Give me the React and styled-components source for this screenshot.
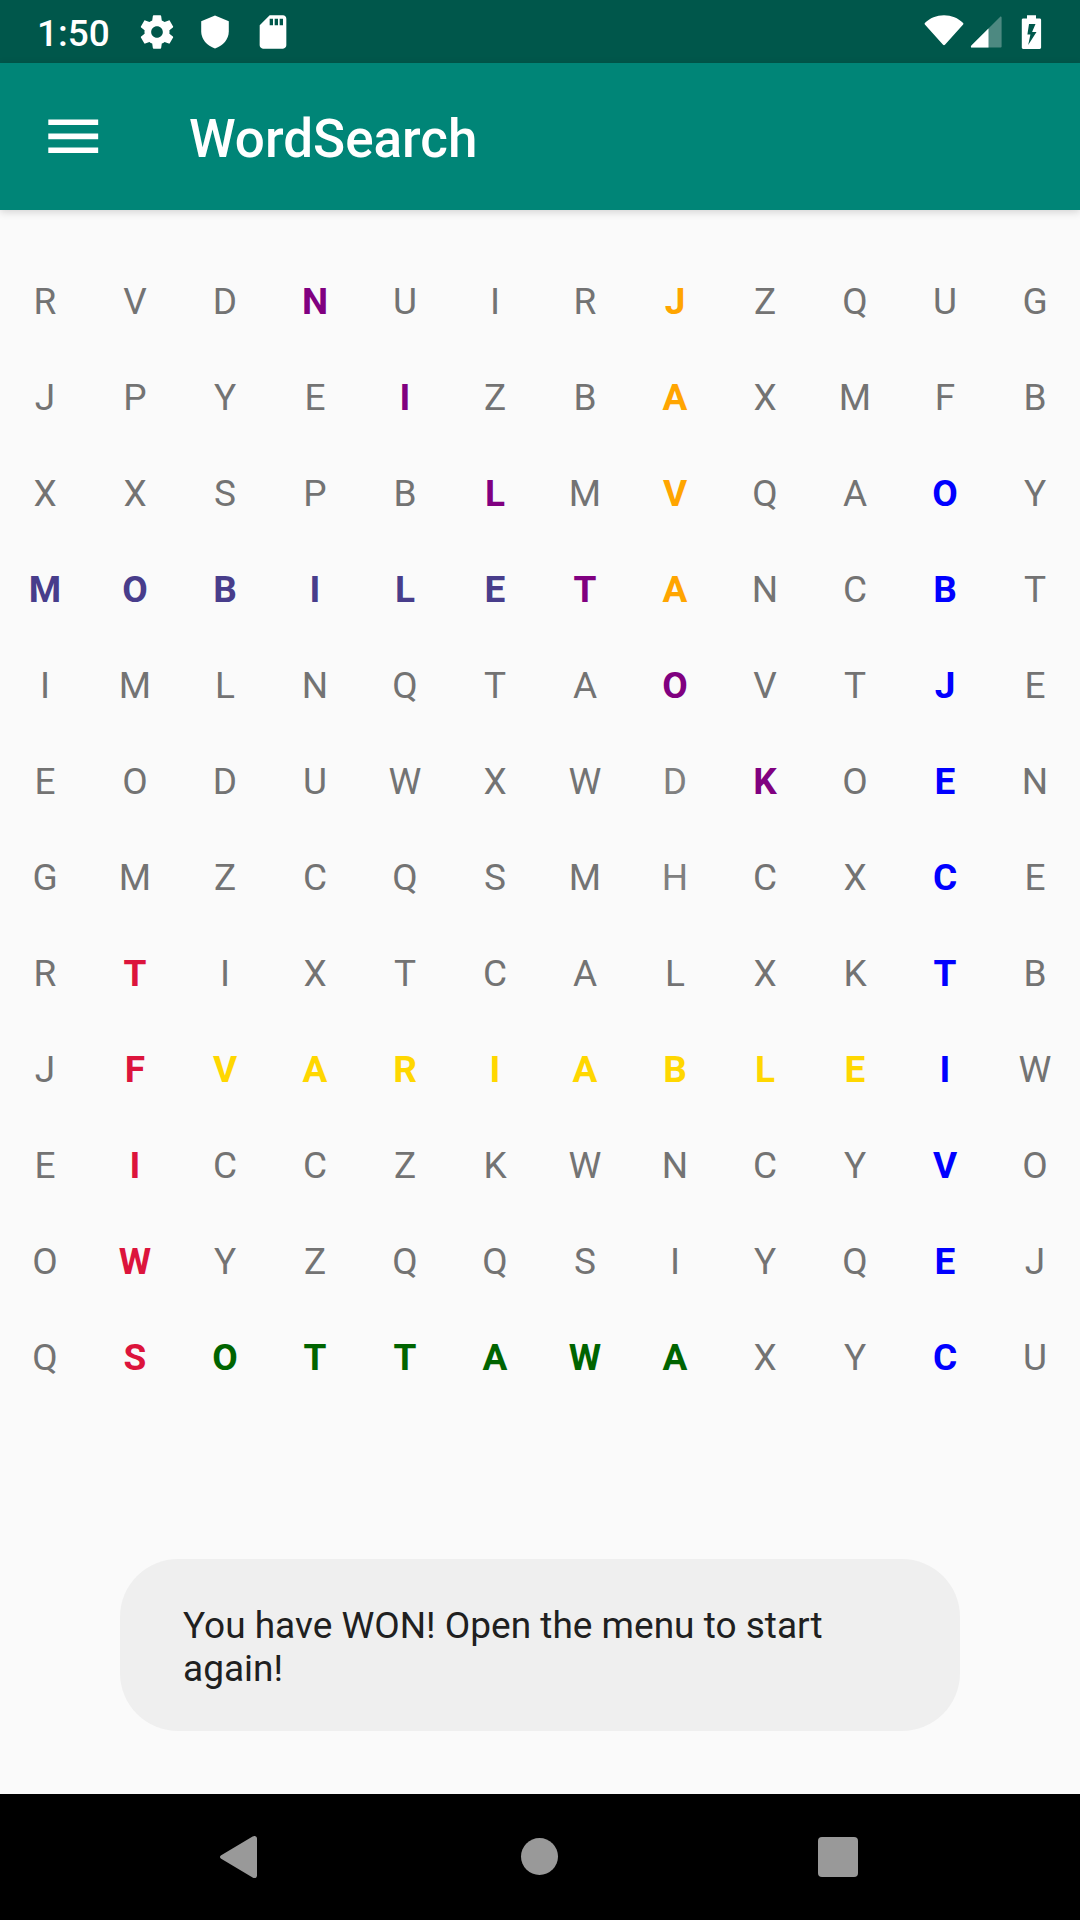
import React from "react";
import styled, { createGlobalStyle } from "styled-components";

const GlobalStyle = createGlobalStyle`
  *, *::before, *::after { box-sizing: border-box; }
  html, body, #root { height: 100%; }
  body {
    margin: 0;
    background: #fafafa;
    font-family: Roboto, "Liberation Sans", sans-serif;
  }
`;

const Screen = styled.div`
  display: flex;
  flex-direction: column;
  min-height: 100%;
`;

const StatusBar = styled.div`
  display: flex;
  align-items: center;
  justify-content: space-between;
  height: 63px;
  padding: 0 36px 0 37px;
  background: #00574b;
  color: #ffffff;
`;

const StatusGroup = styled.div`
  display: flex;
  align-items: center;
  gap: ${(p) => p.$gap}px;
`;

const Clock = styled.time`
  margin-right: 9px;
  padding-top: 3px;
  font-size: 37px;
  font-weight: 500;
  line-height: 43px;
`;

const Icon = styled.svg`
  display: block;
  flex: none;
  fill: currentColor;
`;

const AppBar = styled.header`
  display: flex;
  align-items: center;
  height: 147px;
  padding: 0 42px;
  gap: 84px;
  background: #008577;
  color: #ffffff;
  box-shadow: 0 2px 8px rgba(0, 0, 0, 0.16);
`;

const IconButton = styled.button`
  display: flex;
  padding: 0;
  border: 0;
  background: none;
  color: inherit;
  cursor: pointer;
`;

const Title = styled.h1`
  margin: 0;
  padding-top: 4px;
  font-size: 53px;
  font-weight: 500;
  line-height: 62px;
`;

const Main = styled.main`
  display: flex;
  flex: 1;
  flex-direction: column;
  justify-content: space-between;
`;

const Board = styled.div`
  display: grid;
  grid-template-columns: repeat(12, 1fr);
  grid-auto-rows: 96px;
  padding-top: 43px;
`;

const Letter = styled.span`
  display: flex;
  align-items: center;
  justify-content: center;
  color: ${(p) => p.$color};
  font-size: 37px;
  font-weight: ${(p) => (p.$found ? 700 : 400)};
  line-height: 43px;
`;

const Toast = styled.p`
  margin: 48px 120px 63px;
  padding: 45px 63px 41px;
  border-radius: 58px;
  background: #efefef;
  color: #202020;
  font-size: 37px;
  line-height: 43px;
`;

const NavBar = styled.nav`
  display: grid;
  grid-template-columns: repeat(3, 1fr);
  align-items: center;
  justify-items: center;
  height: 126px;
  padding: 0 90px;
  background: #000000;
  color: #999999;
`;

const ROWS = [
  "RVDNUIRJZQUG",
  "JPYEIZBAXMFB",
  "XXSPBLMVQAOY",
  "MOBILETANCBT",
  "IMLNQTAOVTJE",
  "EODUWXWDKOEN",
  "GMZCQSMHCXCE",
  "RTIXTCALXKTB",
  "JFVARIABLEIW",
  "EICCZKWNCYVO",
  "OWYZQQSIYQEJ",
  "QSOTTAWAXYCU",
];

// Each word starts at [row, column] and runs in the direction [down, right].
const WORDS = [
  { word: "KOTLIN", start: [5, 8], step: [-1, -1], color: "#800080" },
  { word: "JAVA", start: [0, 7], step: [1, 0], color: "#ffa500" },
  { word: "MOBILE", start: [3, 0], step: [0, 1], color: "#483d8b" },
  { word: "OBJECTIVEC", start: [2, 10], step: [1, 0], color: "#0000ff" },
  { word: "SWIFT", start: [11, 1], step: [-1, 0], color: "#dc143c" },
  { word: "VARIABLE", start: [8, 2], step: [0, 1], color: "#ffd700" },
  { word: "OTTAWA", start: [11, 2], step: [0, 1], color: "#006400" },
];

// Letters that were selected and released again keep a slightly lighter gray.
const RELEASED = new Set(["5-7", "6-7"]);

const found = new Map();
WORDS.forEach(({ word, start, step, color }) => {
  for (let i = 0; i < word.length; i += 1) {
    found.set(`${start[0] + step[0] * i}-${start[1] + step[1] * i}`, color);
  }
});

export default function App() {
  return (
    <>
      <GlobalStyle />
      <Screen>
        <StatusBar>
          <StatusGroup $gap={18}>
            <Clock>1:50</Clock>
            <Icon width="40" height="40" viewBox="0 0 24 24">
              <path d="M19.43 12.98c.04-.32.07-.64.07-.98s-.03-.66-.07-.98l2.11-1.65c.19-.15.24-.42.12-.64l-2-3.46c-.12-.22-.39-.3-.61-.22l-2.49 1c-.52-.4-1.08-.73-1.69-.98l-.38-2.65C14.46 2.18 14.25 2 14 2h-4c-.25 0-.46.18-.49.42l-.38 2.65c-.61.25-1.17.59-1.69.98l-2.49-1c-.23-.09-.49 0-.61.22l-2 3.46c-.13.22-.07.49.12.64l2.11 1.65c-.04.32-.07.65-.07.98s.03.66.07.98l-2.11 1.65c-.19.15-.24.42-.12.64l2 3.46c.12.22.39.3.61.22l2.49-1c.52.4 1.08.73 1.69.98l.38 2.65c.03.24.24.42.49.42h4c.25 0 .46-.18.49-.42l.38-2.65c.61-.25 1.17-.59 1.69-.98l2.49 1c.23.09.49 0 .61-.22l2-3.46c.12-.22.07-.49-.12-.64l-2.11-1.65zM12 15.5c-1.93 0-3.5-1.57-3.5-3.5s1.57-3.5 3.5-3.5 3.5 1.57 3.5 3.5-1.57 3.5-3.5 3.5z" />
            </Icon>
            <Icon width="40" height="40" viewBox="0 0 40 40">
              <path d="M20 3.5 6.2 9.2v10.3c0 7.500 5.800 14.500 13.800 17 8-2.500 13.800-9.500 13.800-17V9.200z" />
            </Icon>
            <Icon width="40" height="40" viewBox="0 0 24 24">
              <path d="M18 2h-8L4.020 8 4 20c0 1.100.9 2 2 2h12c1.100 0 2-.9 2-2V4c0-1.100-.9-2-2-2zm-6 6h-2V4h2v4zm3 0h-2V4h2v4zm3 0h-2V4h2v4z" />
            </Icon>
          </StatusGroup>
          <StatusGroup $gap={6}>
            <Icon width="40" height="34" viewBox="0 0 42 34" preserveAspectRatio="xMidYMin">
              <path d="M.9 8.400C6.300 3.200 13.200.3 21 .3s14.700 2.900 20.100 8.100c.4.500.4 1 0 1.500L22 31.300c-.6.700-1.400.7-2 0L.9 9.900c-.4-.5-.4-1 0-1.500z" />
            </Icon>
            <Icon width="32" height="34" viewBox="0 0 32 34">
              <path opacity=".3" d="M30 1.900 1.400 30.500c-.9.900-.6 2.100.6 2.100h28.500c.7 0 1.100-.4 1.100-1.100V2.600c0-1.100-.9-1.400-1.600-.7z" />
              <path d="M18.500 13.400 1.400 30.500c-.9.900-.6 2.100.6 2.100h16.500z" />
            </Icon>
            <Icon width="36" height="34" viewBox="-1 0 36 34">
              <path
                fillRule="evenodd"
                d="M18 .2h9v3.300h3.700c.8 0 1.400.6 1.400 1.400v27.700c0 .8-.6 1.400-1.400 1.400H14.200c-.8 0-1.400-.6-1.400-1.400V4.900c0-.8.6-1.400 1.400-1.400H18zM20 9l-1.600 10.500h3L19.200 30l8.300-13h-4.400L26.500 9z"
              />
            </Icon>
          </StatusGroup>
        </StatusBar>

        <AppBar>
          <IconButton type="button" aria-label="Open menu">
            <Icon width="63" height="63" viewBox="0 0 24 24">
              <path d="M2.400 16.200h19v2.100h-19zM2.400 10.900h19V13h-19zM2.400 5.500h19v2.100h-19z" />
            </Icon>
          </IconButton>
          <Title>WordSearch</Title>
        </AppBar>

        <Main>
          <Board>
            {ROWS.flatMap((row, r) =>
              [...row].map((letter, c) => {
                const key = `${r}-${c}`;
                const idle = RELEASED.has(key) ? "#808080" : "#737373";
                return (
                  <Letter key={key} $found={found.has(key)} $color={found.get(key) || idle}>
                    {letter}
                  </Letter>
                );
              })
            )}
          </Board>
          <Toast role="status">You have WON! Open the menu to start again!</Toast>
        </Main>

        <NavBar>
          <IconButton type="button" aria-label="Back">
            <Icon width="64" height="64" viewBox="0 0 64 64">
              <path d="M13.200 30.200 44.600 11.600c2-1.200 4.400-.4 4.400 2v36.800c0 2.400-2.400 3.200-4.400 2L13.200 33.800c-1.600-1-1.600-2.600 0-3.600z" />
            </Icon>
          </IconButton>
          <IconButton type="button" aria-label="Home">
            <Icon width="64" height="64" viewBox="0 0 64 64">
              <circle cx="31.500" cy="31.500" r="18.500" />
            </Icon>
          </IconButton>
          <IconButton type="button" aria-label="Recent apps">
            <Icon width="64" height="64" viewBox="0 0 64 64">
              <rect x="10" y="12" width="40" height="40" rx="4" />
            </Icon>
          </IconButton>
        </NavBar>
      </Screen>
    </>
  );
}
